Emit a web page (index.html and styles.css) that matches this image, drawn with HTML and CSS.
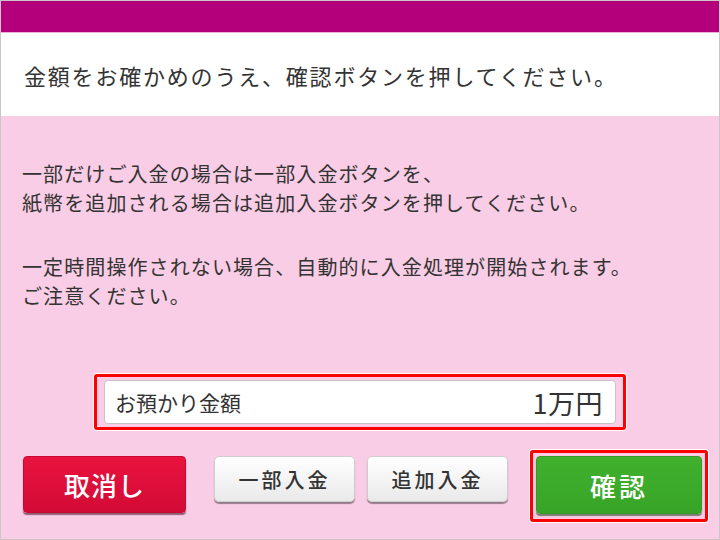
FILE: index.html
```html
<!doctype html>
<html lang="ja">
  <head>
    <meta charset="utf-8">
    <title>入金確認</title>
    <link rel="stylesheet" href="styles.css">
  </head>
  <body>
    <div class="screen">
      <div class="topbar"></div>
      <div class="notice">金額をお確かめのうえ、確認ボタンを押してください。</div>
      <div class="main">
        <div class="message">
          <p>一部だけご入金の場合は一部入金ボタンを、<br>紙幣を追加される場合は追加入金ボタンを押してください。</p>
          <p>一定時間操作されない場合、自動的に入金処理が開始されます。<br>ご注意ください。</p>
        </div>
        <div class="amount-wrap highlight">
          <div class="amount">
            <span class="amount-label">お預かり金額</span>
            <span class="amount-value">1万円</span>
          </div>
        </div>
        <div class="buttons">
          <button class="btn btn-cancel">取消し</button>
          <button class="btn btn-sub btn-partial">一部入金</button>
          <button class="btn btn-sub btn-add">追加入金</button>
          <div class="confirm-wrap highlight">
            <button class="btn btn-confirm">確認</button>
          </div>
        </div>
      </div>
    </div>
  </body>
</html>
```

FILE: styles.css
```css
* {
  box-sizing: border-box;
}
body {
  margin: 0;
  font-family: "Noto Sans CJK JP", "Noto Sans", sans-serif;
  color: #333;
}
.screen {
  width: 720px;
  height: 540px;
  border: 1px solid #c8c8c8;
  display: flex;
  flex-direction: column;
  background: #f9cde5;
}
.topbar {
  height: 32px;
  background: #b5007b;
  border-bottom: 1px solid #eab3d6;
}
.notice {
  height: 83px;
  background: #fff;
  display: flex;
  align-items: center;
  padding-left: 23px;
  font-size: 22px;
  letter-spacing: 1.8px;
}
.main {
  flex: 1;
  padding: 43px 0 0 21px;
}
.message {
  display: flow-root;
}
.message p {
  margin: 0 0 35px;
  font-size: 20px;
  line-height: 29px;
  letter-spacing: 1.1px;
}
.message p:last-child {
  margin-bottom: 0;
}
.highlight {
  border: 3px solid #f00;
  border-radius: 3px;
  background: #f9cde5;
  box-shadow: 0 0 0 1px #fff;
}
.amount-wrap {
  margin: 64px 0 0 72px;
  width: 532px;
  padding: 3px 7px;
}
.amount {
  height: 44px;
  background: #fff;
  border: 1px solid #c7c2c6;
  border-radius: 4px;
  display: flex;
  align-items: center;
  justify-content: space-between;
  padding: 0 12px 0 10px;
}
.amount-label {
  font-size: 21px;
}
.amount-value {
  font-size: 27px;
  letter-spacing: 0.5px;
}
.buttons {
  display: flex;
  align-items: flex-start;
  margin-top: 20px;
}
.btn {
  font-family: inherit;
  border-radius: 4px;
  cursor: pointer;
  padding: 0;
}
.btn-cancel {
  margin: 6px 0 0 1px;
  width: 163px;
  height: 57px;
  border: 1px solid #c80a33;
  background: linear-gradient(#ea123e, #d20b36);
  box-shadow: 0 2px 1px rgba(60, 0, 20, 0.55);
  color: #fff;
  font-size: 26px;
  font-weight: 500;
  letter-spacing: 1px;
}
.btn-sub {
  margin-top: 6px;
  width: 141px;
  height: 46px;
  border: 1px solid #cfcfcf;
  border-radius: 5px;
  background: linear-gradient(#ffffff, #e9e9e9);
  box-shadow: 0 2px 1px rgba(0, 0, 0, 0.4);
  color: #333;
  font-size: 20px;
  font-weight: 500;
  letter-spacing: 3px;
}
.btn-partial {
  margin-left: 28px;
}
.btn-add {
  margin-left: 12px;
}
.confirm-wrap {
  margin-left: 22px;
  padding: 3px 3px 5px;
}
.btn-confirm {
  display: block;
  width: 166px;
  height: 58px;
  border: 1px solid #349b25;
  background: linear-gradient(#41b02e, #37a427);
  box-shadow: 0 2px 1px rgba(0, 40, 0, 0.5);
  color: #fff;
  font-size: 26px;
  font-weight: 500;
  letter-spacing: 3px;
}
```
